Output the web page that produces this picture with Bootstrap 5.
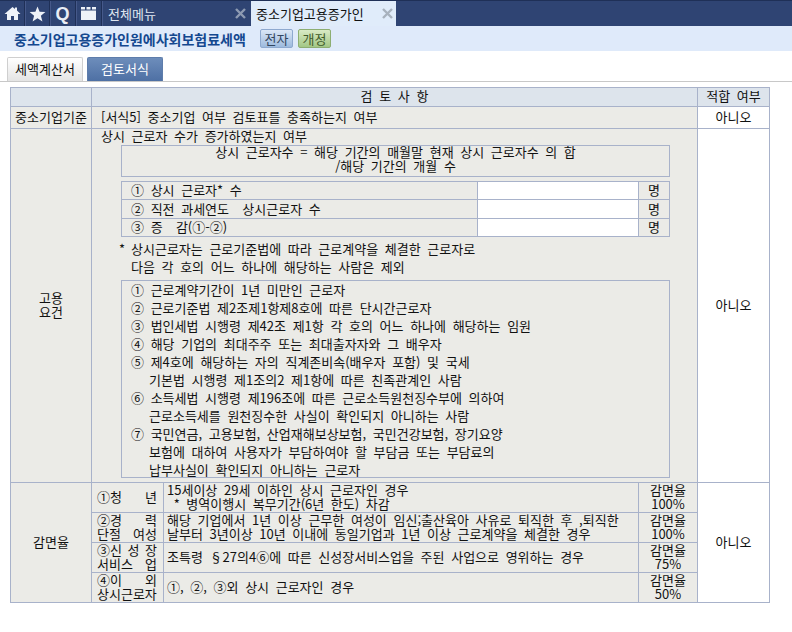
<!DOCTYPE html>
<html lang="ko">
<head>
<meta charset="utf-8">
<title>중소기업고용증가인원에 대한 사회보험료 세액공제</title>
<link href="https://cdn.jsdelivr.net/npm/bootstrap@5.3.0/dist/css/bootstrap.min.css" rel="stylesheet">
<style>
html,body{height:100%}
body{width:792px;height:632px;overflow:hidden;background:#fff;color:#111;font-family:"Noto Sans CJK KR","Liberation Sans",sans-serif;font-size:13px;line-height:14px;word-spacing:3px}
.topbar{height:26px;background:#2f4473;border-top:1px solid #1f3057}
.icon-tab{width:25px;height:25px;border-right:1px solid #1f3057;box-shadow:1px 0 0 #46598a}
.icon-wide{width:26px}
.icon-tab svg{display:block}
.q-mark{color:#e8edf5;font:bold 18px/1 "Liberation Sans",sans-serif}
.menu-tab{width:149px;height:25px;color:#dfe6f0;padding:0 5px 0 6px}
.open-tab{width:145px;height:25px;background:#e0ecfa;color:#111;padding:0 3px 0 5px}
.titlebar{height:25px;background:#dfeafa;padding-left:14px}
.title-text{width:246px;color:#14488f;font-weight:700;font-size:14px}
.mini-btn{width:33px;height:19px;border-radius:2px;line-height:17px;text-align:center;color:#33465f}
.mini-blue{border:1px solid #8ea9cf;background:linear-gradient(#dbe7f6,#9dbade)}
.mini-green{border:1px solid #8dae72;background:linear-gradient(#d9eac5,#a3c786);color:#3f5a2a;margin-left:5px}
.tabstrip{height:31px;padding:6px 0 0 7px;border-bottom:1px solid #c8c8c8}
.sub-tab{width:76px;height:24px;text-align:center;line-height:22px;border-radius:2px 2px 0 0}
.sub-plain{border:1px solid #cfcfcf;border-bottom:0;background:linear-gradient(#fff,#e4e4e4);color:#111}
.sub-active{border:1px solid #5e7dab;border-bottom:0;background:linear-gradient(#6d8dbb,#4e70a4);color:#fff;margin-left:4px}
.sheet{padding:5px 22px 0 10px}
.review-table{width:759px;table-layout:fixed;margin:0;--bs-table-bg:transparent;--bs-border-color:#a8b2ca;border-color:#a8b2ca;color:#111}
.review-table td{padding:0 0 2px;background:#ebebe7;border:1px solid #a8b2ca;vertical-align:middle;line-height:14px;color:#111}
.review-table td.hd{background:#dde4ec;padding-bottom:3px}
.review-table td.answer{background:#fff}
.review-table td.body-cell{padding:0}
.row-head{height:19px}.row-std{height:22px}.row-main{height:354px}.row-sub{height:30px}
.review-table td.cell-text{padding-left:9px}
.review-table td.cell-lines{padding:0 0 1px 3px}
.review-table td.cell-side{padding:0 6px 1px 5px}
.review-table td.rate{padding-bottom:1px}
.lead-line{padding:0 0 0 9px;height:16px;line-height:14px}
.formula{margin-left:29px;width:549px;height:32px;border:1px solid #a8b2ca;line-height:14px;text-align:center}
.formula-in{margin-top:-1px}
.count-table{margin:4px 0 0 29px;width:548px;table-layout:fixed}
.review-table .count-table td{line-height:16px;padding-bottom:1px}
.count-row-a{height:18px}.count-row-b{height:19px}
.review-table .count-table td.lbl{padding-left:9px}
.review-table .count-table td.blank{background:#fff}
.note{margin:3px 0 0 27px;line-height:18px}
.note-star{display:inline-block;width:12px}
.note-in{padding-left:12px}
.list-box{margin:4px 0 0 29px;width:549px;height:198px;border:1px solid #a8b2ca;padding-left:9px;line-height:18px}
.list-box div{height:18px;white-space:nowrap}
.hang{padding-left:18px}
</style>
</head>
<body>
<div class="topbar d-flex">
  <div class="icon-tab d-flex align-items-center justify-content-center"><svg width="17" height="15" viewBox="0 0 17 15"><path d="M8.500 1 0.500 8h2.500v6h4v-4h3v4h4V8h2.500L13 4.600V1.500h-2v1.400z" fill="#eef2f8"/></svg></div>
  <div class="icon-tab d-flex align-items-center justify-content-center"><svg width="17" height="16" viewBox="0 0 17 16"><path d="M8.500 0.500 10.600 5.800 16.400 6.100 11.900 9.700 13.400 15.400 8.500 12.200 3.600 15.400 5.100 9.700 0.600 6.100 6.400 5.800z" fill="#eef2f8"/></svg></div>
  <div class="icon-tab icon-wide d-flex align-items-center justify-content-center q-mark">Q</div>
  <div class="icon-tab icon-wide d-flex align-items-center justify-content-center"><svg width="15" height="13" viewBox="0 0 15 13"><path d="M0 0h4v2.500H0zM5.500 0h4v2.500h-4zM11 0h4v2.500h-4zM0 3.500h15V13H0z" fill="#eef2f8"/></svg></div>
  <div class="menu-tab d-flex align-items-center justify-content-between"><span>전체메뉴</span><svg width="11" height="11" viewBox="0 0 11 11"><path d="M1 1 10 10M10 1 1 10" stroke="#8d9ab2" stroke-width="2.400" fill="none"/></svg></div>
  <div class="open-tab d-flex align-items-center justify-content-between"><span>중소기업고용증가인</span><svg width="11" height="11" viewBox="0 0 11 11"><path d="M1 1 10 10M10 1 1 10" stroke="#a8b2bd" stroke-width="2.400" fill="none"/></svg></div>
</div>
<div class="titlebar d-flex align-items-center">
  <div class="title-text text-nowrap">중소기업고용증가인원에사회보험료세액</div>
  <div class="mini-btn mini-blue">전자</div>
  <div class="mini-btn mini-green">개정</div>
</div>
<div class="tabstrip d-flex">
  <div class="sub-tab sub-plain">세액계산서</div>
  <div class="sub-tab sub-active">검토서식</div>
</div>
<div class="sheet">
<table class="table table-bordered review-table">
  <colgroup><col style="width:81px"><col style="width:72px"><col style="width:475px"><col style="width:59px"><col style="width:72px"></colgroup>
  <tbody>
    <tr class="row-head">
      <td class="hd"></td>
      <td class="hd text-center" colspan="3">검 토 사 항</td>
      <td class="hd text-center">적합 여부</td>
    </tr>
    <tr class="row-std">
      <td class="text-center">중소기업기준</td>
      <td class="cell-text" colspan="3">[서식5] 중소기업 여부 검토표를 충족하는지 여부</td>
      <td class="answer text-center">아니오</td>
    </tr>
    <tr class="row-main">
      <td class="text-center">고용<br>요건</td>
      <td colspan="3" class="align-top body-cell">
        <div class="lead-line">상시 근로자 수가 증가하였는지 여부</div>
        <div class="formula"><div class="formula-in">상시 근로자수 = 해당 기간의 매월말 현재 상시 근로자수 의 합<br>/해당 기간의 개월 수</div></div>
        <table class="count-table">
          <colgroup><col style="width:356px"><col style="width:161px"><col style="width:31px"></colgroup>
          <tbody>
            <tr class="count-row-a"><td class="lbl">① 상시 근로자* 수</td><td class="blank"></td><td class="text-center">명</td></tr>
            <tr class="count-row-b"><td class="lbl">② 직전 과세연도&nbsp; 상시근로자 수</td><td class="blank"></td><td class="text-center">명</td></tr>
            <tr class="count-row-a"><td class="lbl">③ 증&nbsp; 감(①-②)</td><td class="blank"></td><td class="text-center">명</td></tr>
          </tbody>
        </table>
        <div class="note"><span class="note-star">*</span>상시근로자는 근로기준법에 따라 근로계약을 체결한 근로자로<br><span class="note-in d-inline-block">다음 각 호의 어느 하나에 해당하는 사람은 제외</span></div>
        <div class="list-box">
          <div>① 근로계약기간이 1년 미만인 근로자</div>
          <div>② 근로기준법 제2조제1항제8호에 따른 단시간근로자</div>
          <div>③ 법인세법 시행령 제42조 제1항 각 호의 어느 하나에 해당하는 임원</div>
          <div>④ 해당 기업의 최대주주 또는 최대출자자와 그 배우자</div>
          <div>⑤ 제4호에 해당하는 자의 직계존비속(배우자 포함) 및 국세</div>
          <div class="hang">기본법 시행령 제1조의2 제1항에 따른 친족관계인 사람</div>
          <div>⑥ 소득세법 시행령 제196조에 따른 근로소득원천징수부에 의하여</div>
          <div class="hang">근로소득세를 원천징수한 사실이 확인되지 아니하는 사람</div>
          <div>⑦ 국민연금, 고용보험, 산업재해보상보험, 국민건강보험, 장기요양</div>
          <div class="hang">보험에 대하여 사용자가 부담하여야 할 부담금 또는 부담료의</div>
          <div class="hang">납부사실이 확인되지 아니하는 근로자</div>
        </div>
      </td>
      <td class="answer text-center">아니오</td>
    </tr>
    <tr class="row-sub">
      <td class="text-center" rowspan="4">감면율</td>
      <td class="cell-side"><div class="d-flex justify-content-between"><span>①청</span><span>년</span></div></td>
      <td class="cell-lines">15세이상 29세 이하인 상시 근로자인 경우<br>&nbsp;* 병역이행시 복무기간(6년 한도) 차감</td>
      <td class="text-center rate">감면율<br>100%</td>
      <td class="answer text-center" rowspan="4">아니오</td>
    </tr>
    <tr class="row-sub">
      <td class="cell-side"><div class="d-flex justify-content-between"><span>②경</span><span>력</span></div><div class="d-flex justify-content-between"><span>단절</span><span>여성</span></div></td>
      <td class="cell-lines text-nowrap">해당 기업에서 1년 이상 근무한 여성이 임신;출산육아 사유로 퇴직한 후 ,퇴직한<br>날부터 3년이상 10년 이내에 동일기업과 1년 이상 근로계약을 체결한 경우</td>
      <td class="text-center rate">감면율<br>100%</td>
    </tr>
    <tr class="row-sub">
      <td class="cell-side"><div class="d-flex justify-content-between"><span>③신</span><span>성</span><span>장</span></div><div class="d-flex justify-content-between"><span>서비스</span><span>업</span></div></td>
      <td class="cell-lines">조특령 §27의4⑥에 따른 신성장서비스업을 주된 사업으로 영위하는 경우</td>
      <td class="text-center rate">감면율<br>75%</td>
    </tr>
    <tr class="row-sub">
      <td class="cell-side"><div class="d-flex justify-content-between"><span>④이</span><span>외</span></div><div>상시근로자</div></td>
      <td class="cell-lines">①, ②, ③외 상시 근로자인 경우</td>
      <td class="text-center rate">감면율<br>50%</td>
    </tr>
  </tbody>
</table>
</div>
<script src="https://cdn.jsdelivr.net/npm/bootstrap@5.3.0/dist/js/bootstrap.bundle.min.js"></script>
</body>
</html>
